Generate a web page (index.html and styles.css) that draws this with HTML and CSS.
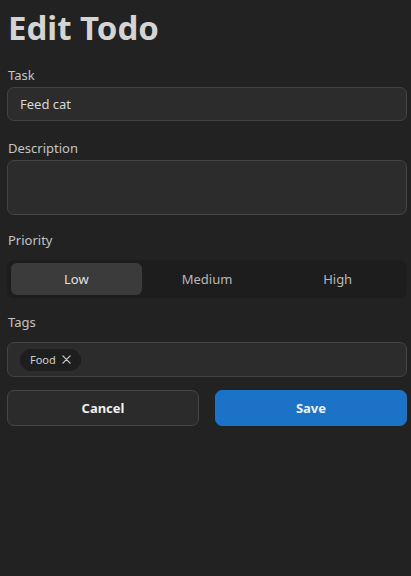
FILE: index.html
```html
<!DOCTYPE html>
<html>
<head>
<meta charset="utf-8">
<link rel="stylesheet" href="styles.css">
</head>
<body>
<main class="page">
  <h1 class="title">Edit Todo</h1>
  <div class="field">
    <label class="label">Task</label>
    <div class="input">Feed cat</div>
  </div>
  <div class="field field-desc">
    <label class="label">Description</label>
    <div class="input textarea"></div>
  </div>
  <div class="field field-priority">
    <label class="label label-wide">Priority</label>
    <div class="segmented">
      <div class="seg active">Low</div>
      <div class="seg">Medium</div>
      <div class="seg">High</div>
    </div>
  </div>
  <div class="field field-tags">
    <label class="label label-wide">Tags</label>
    <div class="input tags">
      <span class="chip">Food
        <svg class="x" width="9" height="9" viewBox="0 0 10 10"><path d="M1 1L9 9M9 1L1 9" stroke="#d0d0d0" stroke-width="1.3" stroke-linecap="round"/></svg>
      </span>
    </div>
  </div>
  <div class="actions">
    <button class="btn cancel">Cancel</button>
    <button class="btn save">Save</button>
  </div>
</main>
</body>
</html>
```

FILE: styles.css
```css
html, body {
  margin: 0;
  background: #222222;
  height: 100%;
}
body {
  font-family: "Noto Sans", "Open Sans", sans-serif;
  color: #d6d6d6;
}
.page {
  padding: 0 4px 0 7px;
  display: flex;
  flex-direction: column;
}
.title {
  margin: 6px 0 15px 1px;
  font-size: 33px;
  line-height: 44px;
  font-weight: 700;
  color: #d4d4d4;
}
.field {
  display: flex;
  flex-direction: column;
  margin-bottom: 17px;
}
.field-desc {
  margin-bottom: 15px;
}
.field-priority {
  margin-bottom: 14px;
}
.field-tags {
  margin-bottom: 13px;
}
.label {
  font-size: 13px;
  line-height: 20px;
  color: #c4c4c4;
  margin: 0 0 2px 1px;
}
.label-wide {
  margin-bottom: 10px;
}
.input {
  box-sizing: border-box;
  height: 34px;
  background: #2c2c2c;
  border: 1px solid #444444;
  border-radius: 7px;
  padding: 0 12px;
  font-size: 13px;
  color: #d8d8d8;
  display: flex;
  align-items: center;
}
.textarea {
  height: 55px;
}
.segmented {
  box-sizing: border-box;
  height: 38px;
  background: #1d1d1d;
  border-radius: 7px;
  padding: 3px 4px;
  display: grid;
  grid-template-columns: 1fr 1fr 1fr;
}
.seg {
  display: flex;
  align-items: center;
  justify-content: center;
  font-size: 13px;
  color: #b8b8b8;
  border-radius: 6px;
}
.seg.active {
  background: #3b3b3b;
  color: #e0e0e0;
}
.tags {
  height: 35px;
  padding: 0 12px;
}
.chip {
  display: inline-flex;
  align-items: center;
  gap: 6px;
  height: 22px;
  padding: 0 10px 0 10px;
  background: #1e1e1e;
  border-radius: 11px;
  font-size: 11px;
  color: #d0d0d0;
}
.actions {
  display: grid;
  grid-template-columns: 1fr 1fr;
  gap: 16px;
}
.btn {
  height: 36px;
  border-radius: 7px;
  font-family: inherit;
  font-size: 13px;
  font-weight: 700;
  color: #f0f0f0;
  cursor: pointer;
}
.cancel {
  background: #2b2b2b;
  border: 1px solid #454545;
}
.save {
  background: #1b72c6;
  border: 1px solid #1b72c6;
}
```
